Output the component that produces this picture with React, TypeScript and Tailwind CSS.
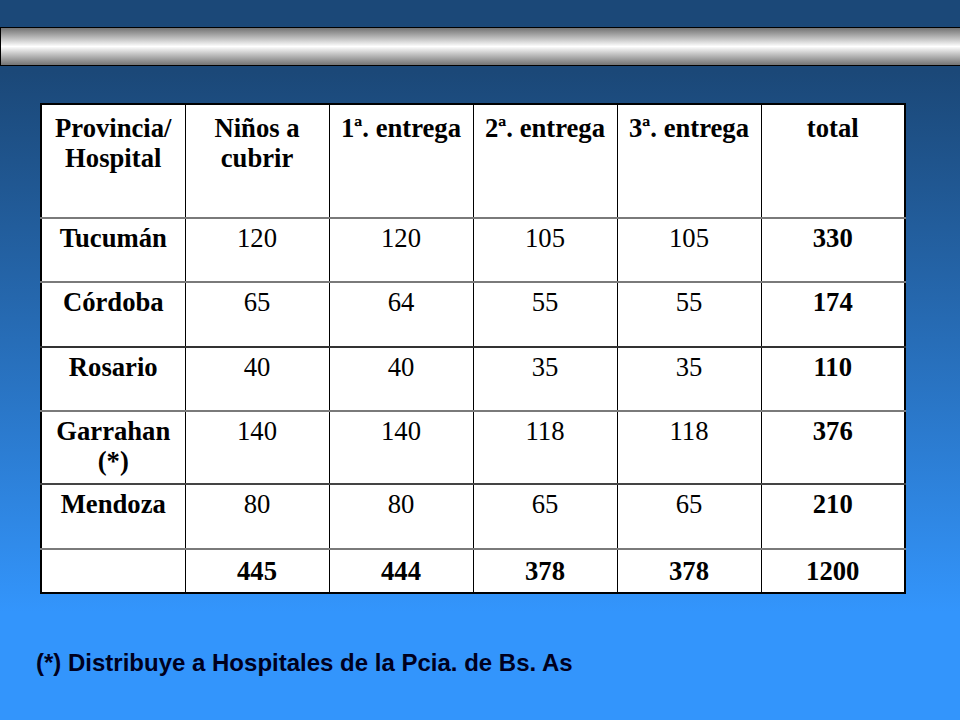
const head = ["Provincia/ Hospital", "Niños a cubrir", "1ª. entrega", "2ª. entrega", "3ª. entrega", "total"];

const rows = [
  { name: "Tucumán", vals: ["120", "120", "105", "105"], total: "330", h: "h-[64px]", line: "border-[#7a7a7a]" },
  { name: "Córdoba", vals: ["65", "64", "55", "55"], total: "174", h: "h-[65px]", line: "border-[#333]" },
  { name: "Rosario", vals: ["40", "40", "35", "35"], total: "110", h: "h-[64px]", line: "border-[#7a7a7a]" },
  { name: "Garrahan (*)", vals: ["140", "140", "118", "118"], total: "376", h: "h-[73px]", line: "border-[#444]" },
  { name: "Mendoza", vals: ["80", "80", "65", "65"], total: "210", h: "h-[65px]", line: "border-[#7a7a7a]" },
];

const App = () => {
  return (
    <div className="w-[960px] h-[720px] overflow-hidden bg-linear-to-b from-[#1b4878] from-10% to-[#3395fc] to-85% flex flex-col">
      <div className="mt-[27px] h-[39px] w-[962px] border border-black bg-linear-to-b from-[#747474] via-white to-[#747474]"></div>

      <table
        className="mt-[37px] ml-[40px] w-[866px] table-fixed border-collapse bg-white text-black text-[26.67px] leading-[30px] border-2 border-black"
        style={{ fontFamily: '"Liberation Serif", "Times New Roman", serif' }}
      >
        <thead>
          <tr className="h-[114px] border-b-2 border-[#7a7a7a]">
            {head.map((t) => (
              <th key={t} className="align-top pt-[8px] px-1 font-bold text-center border-x-[1.5px] border-black">
                {t}
              </th>
            ))}
          </tr>
        </thead>
        <tbody>
          {rows.map((r) => (
            <tr key={r.name} className={`${r.h} border-b-2 ${r.line}`}>
              <td className="align-top pt-[4px] px-1 font-bold text-center border-x-[1.5px] border-black">{r.name}</td>
              {r.vals.map((v, i) => (
                <td key={i} className="align-top pt-[4px] text-center border-x-[1.5px] border-black">
                  {v}
                </td>
              ))}
              <td className="align-top pt-[4px] font-bold text-center border-x-[1.5px] border-black">{r.total}</td>
            </tr>
          ))}
          <tr className="h-[44px]">
            <td className="border-x-[1.5px] border-black"></td>
            {["445", "444", "378", "378", "1200"].map((v, i) => (
              <td key={i} className="align-middle font-bold text-center border-x-[1.5px] border-black">
                {v}
              </td>
            ))}
          </tr>
        </tbody>
      </table>

      <p
        className="mt-[55px] ml-[36px] text-[24px] leading-[28px] font-bold text-[#00001e]"
        style={{ fontFamily: '"Liberation Sans", Arial, sans-serif' }}
      >
        (*) Distribuye a Hospitales de la Pcia. de Bs. As
      </p>
    </div>
  );
};

export default App;
